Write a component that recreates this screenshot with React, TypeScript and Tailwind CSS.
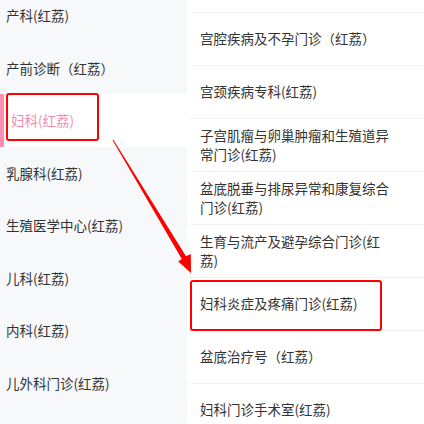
import React from 'react';

const leftItems = [
  '产科(红荔)',
  '产前诊断（红荔）',
  '妇科(红荔)',
  '乳腺科(红荔)',
  '生殖医学中心(红荔)',
  '儿科(红荔)',
  '内科(红荔)',
  '儿外科门诊(红荔)',
];

const rightItems = [
  '宫腔疾病及不孕门诊（红荔）',
  '宫颈疾病专科(红荔)',
  '子宫肌瘤与卵巢肿瘤和生殖道异常门诊(红荔)',
  '盆底脱垂与排尿异常和康复综合门诊(红荔)',
  '生育与流产及避孕综合门诊(红荔)',
  '妇科炎症及疼痛门诊(红荔)',
  '盆底治疗号（红荔）',
  '妇科门诊手术室(红荔)',
];

const selectedLeft = 2;
const markedRight = 5;

const App: React.FC = () => {
  return (
    <div
      className="relative w-[424px] h-[424px] overflow-hidden bg-white flex"
      style={{ fontFamily: '"Noto Sans CJK SC", "Noto Sans", sans-serif' }}
    >
      {/* left: departments */}
      <div className="w-[187px] shrink-0 h-full bg-[#f7f8fa]">
        <div className="-mt-[11px]">
          {leftItems.map((name, i) => (
            <div
              key={name}
              className={`relative h-[52.5px] flex items-center text-[13.5px] ${
                i === selectedLeft ? 'bg-white text-[#f78aad] pl-[11px]' : 'text-[#333] pl-[6px]'
              }`}
            >
              {i === selectedLeft && (
                <>
                  <div className="absolute left-0 top-0 bottom-0 w-[4px] bg-[#ff8db0]" />
                  <div className="absolute left-[6px] top-[-1px] w-[93px] h-[48px] border-2 border-[#ff0000] rounded-[3px]" />
                </>
              )}
              <span className="relative">{name}</span>
            </div>
          ))}
        </div>
      </div>

      {/* right: clinics, list scrolled a little */}
      <div className="flex-1 h-full pl-[3px]">
        <div className="h-[12.5px] border-b border-[#f0f0f0]" />
        {rightItems.map((name, i) => (
          <div
            key={name}
            className="relative h-[53px] flex items-center pl-[10px] border-b border-[#f0f0f0] text-[13.5px] leading-[19px] text-[#333]"
          >
            {i === markedRight && (
              <div className="absolute left-0 top-[2px] w-[192px] h-[51px] border-2 border-[#ff0000] rounded-[3px]" />
            )}
            <span className="relative w-[191px]">{name}</span>
          </div>
        ))}
      </div>

      {/* annotation arrow */}
      <svg className="absolute inset-0 pointer-events-none" width="424" height="424" viewBox="0 0 424 424">
        <polygon
          points="113.4,139.7 186,256.3 190.8,253.9 191,273 178.2,261.5 181.8,258.9 112.6,140.3"
          fill="#ff0000"
        />
      </svg>
    </div>
  );
};

export default App;
